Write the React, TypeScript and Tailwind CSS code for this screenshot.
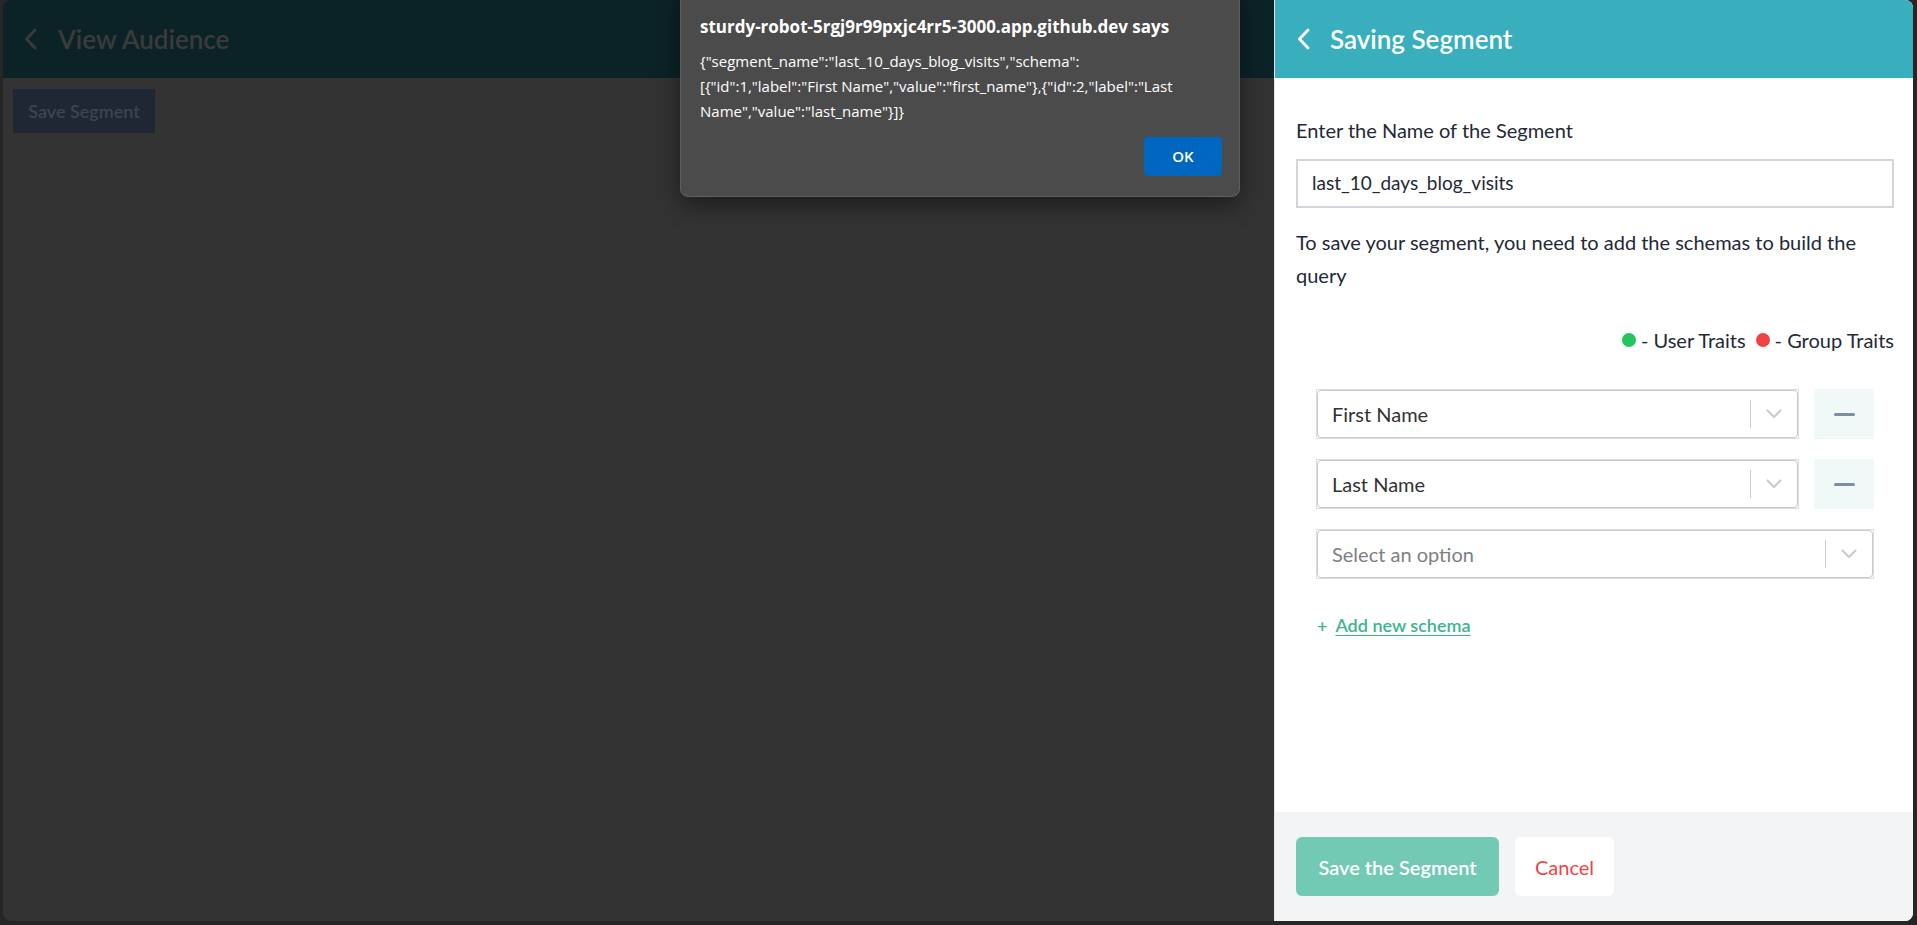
import React from "react";

const font = { fontFamily: "Lato, 'Noto Sans', sans-serif" };
const dlgFont = { fontFamily: "'Open Sans', 'Noto Sans', sans-serif" };

function Chevron({ className }: { className?: string }) {
  return (
    <svg className={className} width="13" height="22" viewBox="0 0 13 22" fill="none">
      <path d="M11 2 L2.5 11 L11 20" stroke="currentColor" strokeWidth="2.8" strokeLinecap="round" strokeLinejoin="round" />
    </svg>
  );
}

function Down() {
  return (
    <svg width="16" height="10" viewBox="0 0 16 10" fill="none">
      <path d="M1.5 1.5 L8 8 L14.5 1.5" stroke="#cccccc" strokeWidth="2.2" strokeLinecap="round" strokeLinejoin="round" />
    </svg>
  );
}

function SelectBox({ label, placeholder }: { label: string; placeholder?: boolean }) {
  return (
    <div className="flex-1 h-[50px] border border-[#dcdde0]">
      <div className="h-full rounded-[4px] border border-[#c9cacd] flex items-center bg-white">
        <span className={`flex-1 pl-[14px] text-[20px] ${placeholder ? "text-[#808080]" : "text-[#333333]"}`}>{label}</span>
        <div className="w-px h-[28px] bg-[#cccccc]" />
        <div className="w-[46px] flex justify-center items-center">
          <Down />
        </div>
      </div>
    </div>
  );
}

function Minus() {
  return (
    <div className="w-[60px] h-[50px] bg-[#f0f9f8] flex items-center justify-center">
      <div className="w-[21px] h-[3px] bg-[#7d8ea4] rounded-sm" />
    </div>
  );
}

export default function App() {
  return (
    <div className="h-[925px] w-full bg-[#262626] pl-[3px] pr-[4px] pb-[4px] flex" style={font}>
      <div className="flex-1 flex rounded-l-lg rounded-r-lg overflow-hidden relative">
        {/* Left dimmed page */}
        <div className="flex-1 flex flex-col bg-[#333333]">
          <div className="h-[78px] bg-[#0b2327] flex items-center pl-[21px] gap-[21px] text-[#3b3b3b]">
            <Chevron />
            <span className="text-[26px] font-semibold">View Audience</span>
          </div>
          <div className="pl-[10px] pt-[11px]">
            <div className="w-[142px] h-[44px] bg-[#1e2733] flex items-center justify-center text-[#3d4550] text-[18px] font-semibold">
              Save Segment
            </div>
          </div>
        </div>

        {/* Right panel */}
        <div className="w-[639px] flex flex-col bg-white border-l border-[#e2e4e8]">
          <div className="h-[78px] bg-[#39afbd] flex items-center pl-[22px] gap-[20px] text-white">
            <Chevron />
            <span className="text-[26px] font-semibold">Saving Segment</span>
          </div>
          <div className="flex-1 pl-[21px] pr-[19px]">
            <div className="mt-[37px] text-[20px] leading-[30px] text-[#1f2937]">Enter the Name of the Segment</div>
            <div className="mt-[14px] h-[49px] border-2 border-[#d3d5da] flex items-center pl-[14px] text-[19px] text-[#1f2937]">
              last_10_days_blog_visits
            </div>
            <p className="mt-[18px] text-[20px] leading-[33px] text-[#1f2937]">
              To save your segment, you need to add the schemas to build the query
            </p>
            <div className="mt-[33px] flex justify-end items-center text-[20px] leading-[30px] text-[#1f2937]">
              <span className="w-[14px] h-[14px] rounded-full bg-[#22c55e] mr-[5px]" />
              <span>- User Traits</span>
              <span className="w-[14px] h-[14px] rounded-full bg-[#ef4444] ml-[10px] mr-[5px]" />
              <span>- Group Traits</span>
            </div>
            <div className="mt-[34px] px-[20px] flex flex-col gap-[20px]">
              <div className="flex items-center gap-[15px]">
                <SelectBox label="First Name" />
                <Minus />
              </div>
              <div className="flex items-center gap-[15px]">
                <SelectBox label="Last Name" />
                <Minus />
              </div>
              <div className="flex items-center">
                <SelectBox label="Select an option" placeholder />
              </div>
            </div>
            <div className="mt-[33px] pl-[21px] text-[18px] leading-[27px] font-semibold text-[#3cb58e] flex items-center gap-[8px]">
              <span>+</span>
              <span className="underline underline-offset-[3px]">Add new schema</span>
            </div>
          </div>
          <div className="h-[109px] bg-[#f3f4f6] flex items-center pl-[21px] gap-[16px]">
            <div className="w-[203px] h-[59px] rounded-[6px] bg-[#72cab4] flex items-center justify-center text-white text-[20px] font-semibold">
              Save the Segment
            </div>
            <div className="w-[99px] h-[59px] rounded-[6px] bg-white flex items-center justify-center text-[#ef4444] text-[20px]">
              Cancel
            </div>
          </div>
        </div>

        {/* Alert dialog */}
        <div
          className="absolute left-[677px] top-[-10px] w-[560px] h-[207px] bg-[#4b4b4b] border border-[#5f5f5f] rounded-lg shadow-[0_8px_24px_rgba(0,0,0,0.45)] text-white"
          style={dlgFont}
        >
          <div className="pl-[19px] pt-[22px]">
            <div className="text-[17px] font-bold leading-[27px] whitespace-nowrap">sturdy-robot-5rgj9r99pxjc4rr5-3000.app.github.dev says</div>
            <div className="mt-[9px] text-[15px] leading-[25px] whitespace-nowrap">
              {'{"segment_name":"last_10_days_blog_visits","schema":'}
              <br />
              {'[{"id":1,"label":"First Name","value":"first_name"},{"id":2,"label":"Last'}
              <br />
              {'Name","value":"last_name"}]}'}
            </div>
          </div>
          <div className="absolute left-[463px] top-[146px] w-[78px] h-[39px] rounded-[4px] bg-[#0067c0] flex items-center justify-center text-[15px] font-semibold">
            OK
          </div>
        </div>
      </div>
    </div>
  );
}
